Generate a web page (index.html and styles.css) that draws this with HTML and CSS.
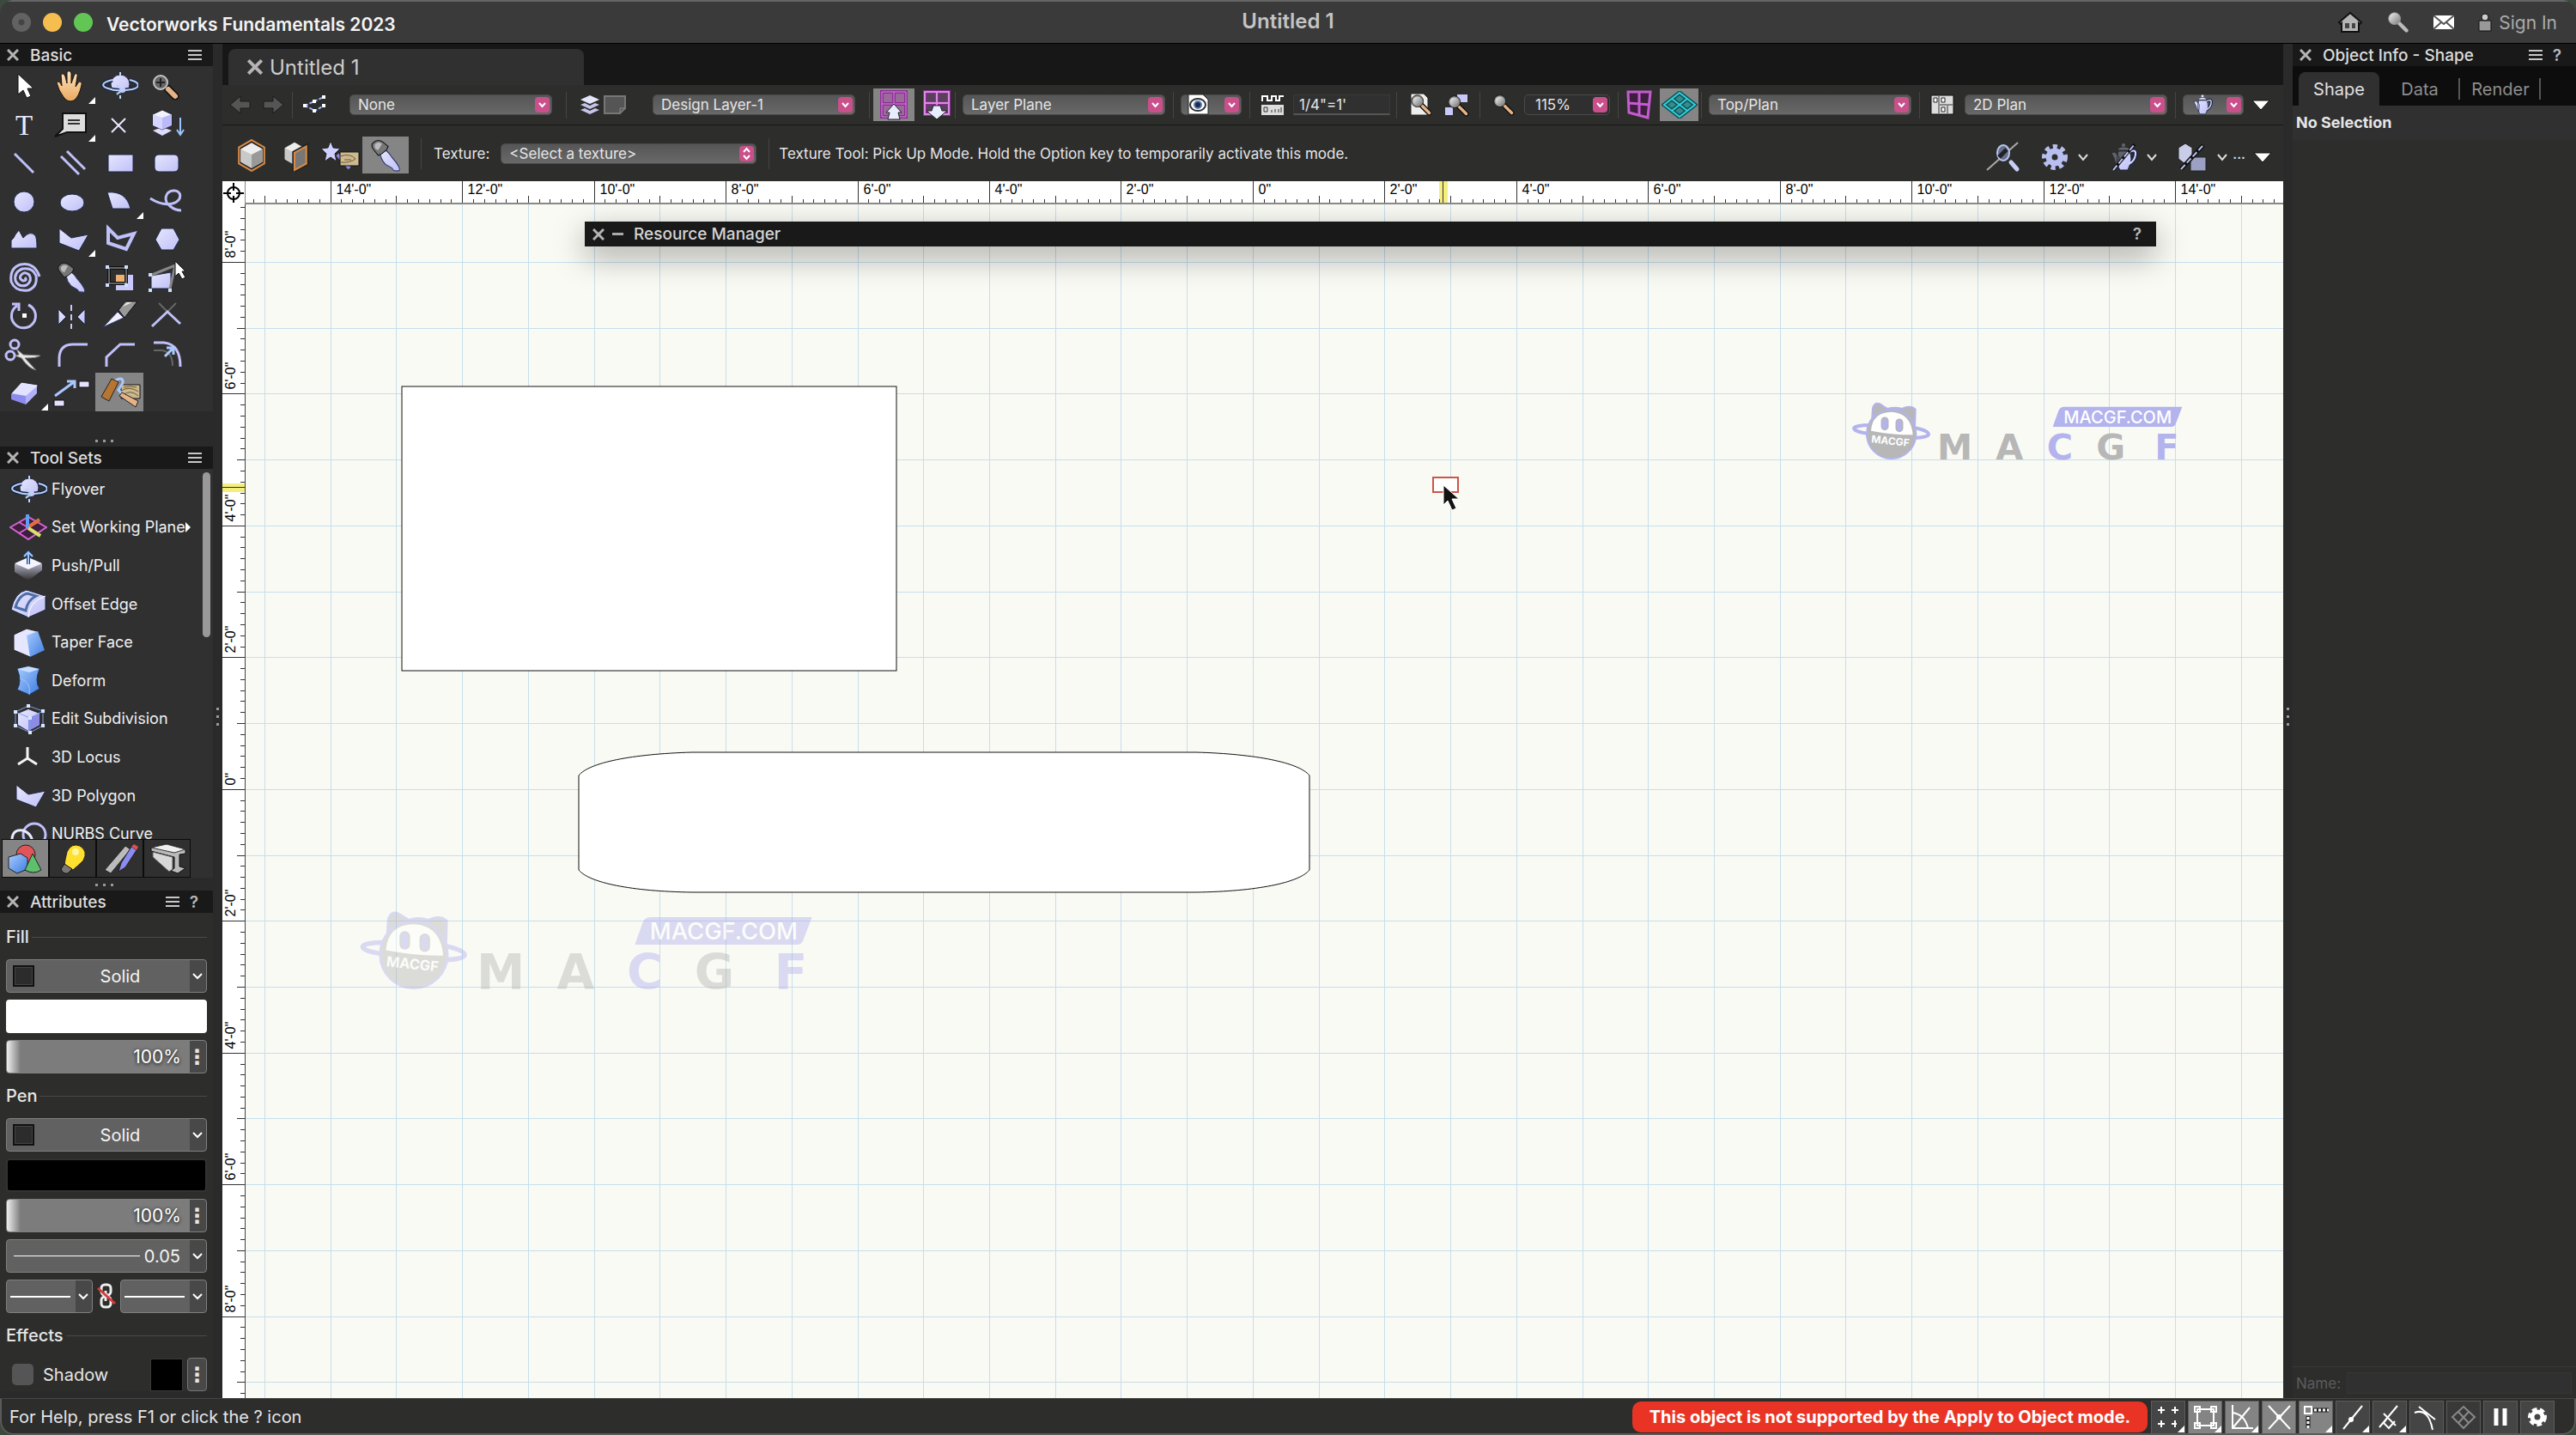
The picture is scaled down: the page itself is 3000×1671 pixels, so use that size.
FILE: index.html
```html
<!DOCTYPE html>
<html lang="en">
<head>
  <meta charset="utf-8">
  <title>Untitled 1</title>
  <link rel="stylesheet" href="styles.css">
</head>
<body>
  <svg class="defs" width="0" height="0" aria-hidden="true">
    <defs>
      <linearGradient id="lav" x1="0" y1="0" x2="1" y2="1"><stop offset="0" stop-color="#e6e6ff"/><stop offset="1" stop-color="#c0c0f8"/></linearGradient>
      <linearGradient id="metal" x1="0" y1="0" x2="1" y2="1"><stop offset="0" stop-color="#f4f4f4"/><stop offset="1" stop-color="#777"/></linearGradient>
      <linearGradient id="blue" x1="0" y1="0" x2="1" y2="1"><stop offset="0" stop-color="#a9ccff"/><stop offset="1" stop-color="#3d7de0"/></linearGradient>
      <linearGradient id="fade" x1="0" y1="0" x2="0" y2="1"><stop offset="0" stop-color="#d8d8f4"/><stop offset="1" stop-color="#d8d8f4" stop-opacity="0"/></linearGradient>
      <linearGradient id="skin" x1="0" y1="0" x2="0" y2="1"><stop offset="0" stop-color="#ffe2bd"/><stop offset="1" stop-color="#e9a85f"/></linearGradient>
    </defs>
    <symbol id="i-close" viewBox="0 0 14 14"><path d="M1 1l12 12M13 1L1 13" stroke="#b4b4b4" stroke-width="3"/></symbol>
    <symbol id="i-menu" viewBox="0 0 16 14"><path d="M0 2h16M0 7h16M0 12h16" stroke="#c8c8c8" stroke-width="2"/></symbol>
    <symbol id="i-chev" viewBox="0 0 14 14"><path d="M2 4l5 6 5-6" fill="none" stroke="#ddd" stroke-width="2"/></symbol>
    <symbol id="i-down" viewBox="0 0 22 14"><path d="M1 2h20L11 13z" fill="#fff" stroke="#111"/></symbol>
    <symbol id="i-flyover" viewBox="0 0 44 40">
      <circle cx="23" cy="19" r="11" fill="url(#lav)" stroke="#1c2742"/>
      <path d="M14 14C0 17 1 22 9 24q8 3 15 2m10-12c13 3 12 9 3 11l-8 1" fill="none" stroke="#1c2742" stroke-width="5"/>
      <path d="M14 14C0 17 1 22 9 24q8 3 15 2m10-12c13 3 12 9 3 11l-8 1M23 5v5M23 32v4M19 20l6 6-6 5" fill="none" stroke="#b9d2fa" stroke-width="2"/>
    </symbol>
    <symbol id="i-dropper" viewBox="0 0 44 40">
      <path d="M16 18l6-4q4 3 7 8l5 6 3 5q2 5-2 4-4 1-6-3l-7-4q-5-5-6-12z" fill="url(#lav)" stroke="#28356b"/>
      <path d="M8 6q5-5 11-1l6 5-2 4-5 4-4 2-5-6q-4-5-1-8z" fill="#777" stroke="#111"/>
      <path d="M10 8q3-4 8-1l-4 7q-5-1-4-6z" fill="#bbb"/>
    </symbol>
    <symbol id="i-poly" viewBox="0 0 44 40"><path d="M8 8l14 11 20-4-11 19-23-9z" fill="url(#lav)" stroke="#1c2742"/></symbol>
    <symbol id="i-glass" viewBox="0 0 30 30"><path d="M15 15l11 11" stroke="#111" stroke-width="7" stroke-linecap="round"/><path d="M16 16l10 10" stroke="#e5b386" stroke-width="4" stroke-linecap="round"/><circle cx="10" cy="10" r="8" fill="#8b8b8b" stroke="#111"/><circle cx="10" cy="10" r="6" fill="url(#metal)"/></symbol>
    <symbol id="i-cube" viewBox="0 0 34 36"><path d="M17 4l12 7v14l-12 7-12-7V11z" fill="#eee"/><path d="M17 17l12-6v14l-12 7z" fill="#999"/><path d="M17 17L5 11v14l12 7z" fill="#c9c9c9"/></symbol>
    <symbol id="i-teapot" viewBox="0 0 30 36">
      <path d="M22 12q8-4 7 3-1 8-8 11" fill="none" stroke="#1c2742" stroke-width="5"/>
      <path d="M9 29q-4-4-5-10l-3-6 4-1 5 6zM9 11h13q4 10 0 17l-2 5h-9q-6-8-2-22z" fill="url(#lav)" stroke="#1c2742"/>
      <path d="M22 12q8-4 7 3-1 8-8 11" fill="none" stroke="#d5d5ff" stroke-width="2"/>
      <path d="M8 10q1-4 7-4t7 4z" fill="#e6e6ff" stroke="#1c2742"/>
      <circle cx="15" cy="4" r="2" fill="#e6e6ff"/>
    </symbol>
  </svg>

  <div class="window">
    <header class="titlebar">
      <div class="lights"><i class="off"></i><i class="yellow"></i><i class="green"></i></div>
      <span class="app-name">Vectorworks Fundamentals 2023</span>
      <span class="doc-name">Untitled 1</span>
      <div class="account">
        <button aria-label="Home"><svg width="30" height="26"><path d="M2 13L15 2l13 11-2 2-1-1v10H5V14l-1 1z" fill="#b5b5b5" stroke="#111" stroke-width="2"/><path d="M9 14h5v6H9zM17 14h4v6h-4z" fill="#444"/></svg></button>
        <button aria-label="Search"><svg width="26" height="26" viewBox="0 0 30 30"><path d="M15 15l11 11" stroke="#bbb" stroke-width="5" stroke-linecap="round"/><circle cx="10" cy="10" r="8" fill="url(#metal)" stroke="#999"/></svg></button>
        <button aria-label="Messages"><svg width="24" height="18"><path d="M0 1h24v16H0z" fill="#fff"/><path d="M0 1l12 10L24 1M0 17l9-8M24 17l-9-8" fill="none" stroke="#555" stroke-width="2"/></svg></button>
        <a href="#" class="signin"><svg width="16" height="22"><path d="M1 9h14v12H1z" fill="#999" stroke="#111"/><circle cx="8" cy="5" r="4" fill="#ccc" stroke="#111"/></svg>Sign In</a>
      </div>
    </header>

    <div class="workspace">
      <aside class="side">
        <section class="palette">
          <h2 class="head"><svg class="x"><use href="#i-close"/></svg>Basic<svg class="menu"><use href="#i-menu"/></svg></h2>
          <div class="tools">
            <button aria-label="Selection"><svg><path d="M15 7v24l6-5 4 9 5-2-4-9h7z" fill="#fff" stroke="#111"/></svg></button>
            <button class="more" aria-label="Pan"><svg><path d="M13 34Q7 26 5 17q3-3 6 4L10 8q3-3 5 2l2 8V5q3-3 5 1v12l4-11q4-1 3 3l-2 12 4-6q4 0 3 4-3 14-9 18-7 3-12-4z" fill="url(#skin)" stroke="#1b1209"/></svg></button>
            <button aria-label="Flyover"><svg><use href="#i-flyover"/></svg></button>
            <button aria-label="Zoom"><svg><path d="M23 24l9 9" stroke="#111" stroke-width="9" stroke-linecap="round"/><path d="M24 25l8 8" stroke="#e5b386" stroke-width="6" stroke-linecap="round"/><circle cx="15" cy="17" r="8" fill="#666" stroke="#c4c4c4" stroke-width="2"/><path d="M10 17h10M15 12v10" stroke="#222" stroke-width="2"/></svg></button>
            <button aria-label="Text"><svg><text x="12" y="33" class="serif-t">T</text></svg></button>
            <button class="more" aria-label="Callout"><svg><path d="M12 8h27v22H17L3 35l9-9z" fill="#ddd" stroke="#111" stroke-width="2"/><path d="M18 16h14M18 20h14" stroke="#333" stroke-width="2"/></svg></button>
            <button aria-label="2D Locus"><svg><path d="M13 14l16 16M29 14L13 30" stroke="#e8e8ff" stroke-width="2"/></svg></button>
            <button aria-label="Extrude"><svg><path d="M6 28l11-4 11 4-11 6z" fill="#dcdcff"/><path d="M17 4l11 5v13l-11 5-11-5V9z" fill="#f2f2ff" stroke="#222"/><path d="M17 13l11-4v13l-11 5z" fill="#babafa"/><path d="M6 9l11 4v14L6 22z" fill="#d5d5ff"/><path d="M38 13v18M34 27l4 6 4-6" stroke="#9cc4ff" stroke-width="2" fill="none"/></svg></button>
            <button aria-label="Line"><svg><path d="M11 10l22 22" class="ln"/></svg></button>
            <button aria-label="Double Line"><svg><path d="M10 13l21 21M17 7l21 21" class="ln"/></svg></button>
            <button aria-label="Rectangle"><svg><path d="M9 11h29v20H9z" class="sh"/></svg></button>
            <button aria-label="Rounded Rectangle"><svg><rect x="8" y="11" width="28" height="20" rx="5" class="sh"/></svg></button>
            <button aria-label="Circle"><svg><circle cx="22" cy="22" r="12" class="sh"/></svg></button>
            <button aria-label="Oval"><svg><ellipse cx="23" cy="23" rx="14" ry="10" class="sh"/></svg></button>
            <button class="more" aria-label="Arc"><svg><path d="M8 11q22-2 27 19H14z" class="sh"/></svg></button>
            <button aria-label="Freehand"><svg><path d="M3 18q14 9 26 6c13-4 10-16 1-15-10 1-12 12-4 18q6 5 13 5" class="ln"/></svg></button>
            <button aria-label="Freeform"><svg><path d="M7 31v-9q3-2 5-7l4-5 5 9q8-9 14-3 2 3 2 15z" class="sh"/></svg></button>
            <button class="more" aria-label="Polygon"><svg><use href="#i-poly"/></svg></button>
            <button aria-label="Polyline"><svg><path d="M9 8l11 11 19-5-9 18-21-7z" class="ln thick"/></svg></button>
            <button aria-label="Regular Polygon"><svg><path d="M16 8h14l7 13-7 12H16L9 21z" class="sh"/></svg></button>
            <button aria-label="Spiral"><svg><path d="M23 20q3 4-2 4-5-2-3-6 4-6 10-1 4 7-3 12-9 3-13-5-2-10 8-14 12-2 16 8 2 13-9 17-15 2-20-10Q5 9 18 5q16-3 22 14" class="ln spiral"/></svg></button>
            <button aria-label="Eyedropper"><svg><use href="#i-dropper"/></svg></button>
            <button aria-label="Clip"><svg><path d="M18 17h20v18H18z" fill="#c8c8fb"/><path d="M18 17h11v10H18z" fill="#eeb070"/><path d="M10 9h20v18H10z" fill="none" stroke="#111" stroke-width="4"/><path d="M10 9h20v18H10z" fill="none" stroke="#bbb"/><path d="M6 6h4v4H6zM28 6h4v4h-4zM6 27h4v4H6zM28 27h4v4h-4z" fill="#cfe0ff"/></svg></button>
            <button aria-label="Reshape"><svg><path d="M4 18l23-4v19H4z" class="sh"/><path d="M5 17L32 6l-6 27" fill="none" stroke="#888" stroke-width="3"/><path d="M1 15h4v4H1zM1 33h4v4H1zM24 33h4v4h-4z" fill="#cfe0ff"/><path d="M32 1v18l4-4 4 7 4-2-4-7h4z" fill="#fff" stroke="#111"/></svg></button>
            <button aria-label="Rotate"><svg><path d="M27 8A14 14 0 1 1 14 9M8 7h8v8" class="ln"/><path d="M20 18h5v5h-5z" fill="#fff"/></svg></button>
            <button aria-label="Mirror"><svg><path d="M7 13v18l9-9zM38 13v18l-9-9z" class="sh"/><path d="M22 8v28" stroke="#c8c8fa" stroke-width="2" stroke-dasharray="7 4"/></svg></button>
            <button aria-label="Split"><svg><path d="M3 34l17-18 7 7z" fill="#f0f0ff" stroke="#28356b"/><path d="M21 14L29 4h14L28 23z" fill="#999" stroke="#111"/><path d="M26 10L31 5h6z" fill="#eee"/></svg></button>
            <button aria-label="Trim"><svg><path d="M13 6l10 10L33 6" fill="none" stroke="#666" stroke-width="2"/><path d="M5 33l18-17 15 14" class="ln"/></svg></button>
            <button aria-label="Scissors"><svg><path d="M13 14l8 7 20 1q-3 3-18 3l13 14q-9-2-17-14l-8-3 5-1z" fill="#e6e6e6" stroke="#777"/><circle cx="11" cy="9" r="5" class="ln"/><circle cx="6" cy="22" r="5" class="ln"/></svg></button>
            <button aria-label="Fillet"><svg><path d="M8 35V24Q9 9 24 9h17" class="ln"/></svg></button>
            <button aria-label="Chamfer"><svg><path d="M7 35V24L23 9h17" class="ln"/></svg></button>
            <button aria-label="Offset"><svg><path d="M7 7h12q19 2 19 28" class="ln"/><path d="M7 16h10q12 2 12 18" fill="none" stroke="#666" stroke-width="2"/><path d="M20 23l10-10M22 13h8v8" fill="none" stroke="#a9ccff" stroke-width="3"/></svg></button>
            <button class="more" aria-label="Eraser"><svg><path d="M7 21L19 8l19 3-1 10-13 12-17-6z" fill="#e3e3ff" stroke="#222"/><path d="M7 21l17 3v10L7 28z" fill="#8c8cf0"/><path d="M24 24l13-11v8L24 34z" fill="#b1b1fa"/></svg></button>
            <button aria-label="Attribute Mapping"><svg><path d="M3 24L25 8M17 7h9v8" fill="none" stroke="#a9c8ff" stroke-width="3"/><path d="M31 7h12v7H31zM2 29h12v7H2z" fill="#e8e0ff" stroke="#111"/></svg></button>
            <button class="active" aria-label="Texture"><svg><path d="M24 11h22v16H24z" fill="#cdb98f" stroke="#111"/><path d="M24 18q10-6 20 1M26 23q9-7 18 1M27 14q8-2 15 0" fill="none" stroke="#6d5a38"/><path d="M17 6q10-5 9 3l-5 8 5 6" fill="none" stroke="#a9c8ff" stroke-width="3"/><path d="M13 4l8 4-11 22-9-5z" fill="#b67632" stroke="#222"/><path d="M22 24l3-4 19 10-3 7z" fill="#e5b386" stroke="#222"/></svg></button>
          </div>
          <div class="grip"><i></i><i></i><i></i></div>
        </section>

        <section class="palette">
          <h2 class="head"><svg class="x"><use href="#i-close"/></svg>Tool Sets<svg class="menu"><use href="#i-menu"/></svg></h2>
          <div class="list-wrap">
            <ul class="list">
              <li><svg><use href="#i-flyover"/></svg>Flyover</li>
              <li class="sub"><svg><path d="M1 20L22 8l21 12-21 14z" fill="#3d1e3d" stroke="#d763d7" stroke-width="2"/><path d="M11 14l22 13M33 14L11 27" stroke="#d763d7" stroke-width="2"/><path d="M21 5v16" stroke="#5ea0f4" stroke-width="4"/><path d="M23 19l12-8" stroke="#e0703b" stroke-width="4"/><path d="M22 21l14 9" stroke="#dbe26a" stroke-width="4"/></svg>Set Working Plane</li>
              <li><svg><path d="M6 19l16-7 16 7v7l-16 12L6 28z" fill="url(#fade)"/><path d="M6 18l16-7 16 7-16 7z" fill="#f4f4ff"/><path d="M22 19V5M17 10l5-5 5 5" fill="none" stroke="#223f66" stroke-width="4"/><path d="M22 19V5M17 10l5-5 5 5" fill="none" stroke="#9cc4ff" stroke-width="2"/></svg>Push/Pull</li>
              <li><svg><path d="M2 27Q6 7 20 4l22 7v16L22 36z" fill="url(#lav)" stroke="#1c2742"/><path d="M22 36q0-18 20-25" fill="none" stroke="#fff"/><path d="M7 24Q11 10 21 8l10 3Q21 16 19 28z" fill="none" stroke="#4d6fa8" stroke-width="3"/></svg>Offset Edge</li>
              <li><svg><path d="M5 11l15-7 12 3 9 22-17 8L5 29z" fill="#e6e6ff" stroke="#222"/><path d="M20 12l13-5 8 22-17 8z" fill="url(#blue)"/></svg>Taper Face</li>
              <li><svg><path d="M9 7l13-3 13 3q-6 14 0 23l-12 7-14-6q6-10 0-24z" fill="url(#blue)" stroke="#1c3562"/><path d="M9 7l14 4 12-4-13-3z" fill="#c8deff"/><path d="M12 18q14 4 11 19" fill="none" stroke="#9cc4ff"/></svg>Deform</li>
              <li><svg><path d="M22 9l13 5v13l-13 7-12-7V14z" fill="url(#lav)"/><path d="M22 19l13-5v13l-13 7z" fill="#8c8ce8"/><path d="M22 5l17 6v17l-15 8-17-8V12zM7 12l17 7 15-8M24 19v17" fill="none" stroke="#7da0e4"/><path d="M20 3h4v4h-4zM5 10h4v4H5zM37 9h4v4h-4zM22 17h4v4h-4zM5 26h4v4H5zM37 26h4v4h-4zM22 34h4v4h-4z" fill="#dce6ff"/></svg>Edit Subdivision</li>
              <li><svg><path d="M21 9v15M21 22L10 29M21 22l11 7" stroke="#f4f4f4" stroke-width="3" fill="none"/></svg>3D Locus</li>
              <li><svg><use href="#i-poly"/></svg>3D Polygon</li>
              <li><svg><circle cx="29" cy="21" r="13" class="ln"/><path d="M3 26q1-12 13-10 11 4 11 16" fill="none" stroke="#e8e8ff" stroke-width="3"/></svg>NURBS Curve</li>
            </ul>
            <div class="thumb"></div>
          </div>
          <div class="sets">
            <button class="active" aria-label="3D Modeling"><svg><circle cx="22" cy="15" r="11" fill="#e0555a" stroke="#222"/><path d="M2 18l14-4 8 5v13l-12 5L2 31z" fill="url(#blue)" stroke="#222"/><path d="M30 14l10 19q-9 6-19 0z" fill="#5cc06c" stroke="#222"/></svg></button>
            <button aria-label="Visualization"><svg><path d="M12 27Q13 20 15 12 20 1 30 5q10 6 4 17-6 6-12 11z" fill="#ffe02e" stroke="#222"/><path d="M12 26l9 6-5 5q-6 1-8-5z" fill="#777" stroke="#111"/><circle cx="25" cy="12" r="4" fill="#fff6a0"/></svg></button>
            <button aria-label="Dims/Notes"><svg><path d="M4 33L28 5l6 4L11 37z" fill="#bbb" stroke="#222"/><path d="M20 35l3-10L35 6l6 4-13 20z" fill="#8c8cf0" stroke="#222"/><path d="M35 6l6 4 2-4-5-3z" fill="#d8505a"/></svg></button>
            <button aria-label="Detailing"><svg><path d="M3 7l18-4 22 6v5l-7 1v14l7 2-9 6-8-3 4-3V18L3 11z" fill="#bbb" stroke="#111"/><path d="M3 7l18-4 22 6-13 4z" fill="#eee" stroke="#333"/><path d="M5 12l23 6v14l-4 3L5 18z" fill="#d8d8d8" stroke="#555"/></svg></button>
          </div>
          <div class="grip low"><i></i><i></i><i></i></div>
        </section>

        <section class="palette attributes">
          <h2 class="head"><svg class="x"><use href="#i-close"/></svg>Attributes<svg class="menu"><use href="#i-menu"/></svg><b class="help">?</b></h2>
          <h3>Fill</h3>
          <div class="field"><i class="swatch"></i><select aria-label="Fill style"><option>Solid</option></select></div>
          <button class="color white" aria-label="Fill color"></button>
          <div class="field opacity"><output>100%</output><button class="dots" aria-label="Fill opacity options">⋮</button></div>
          <h3>Pen</h3>
          <div class="field"><i class="swatch"></i><select aria-label="Pen style"><option>Solid</option></select></div>
          <button class="color black" aria-label="Pen color"></button>
          <div class="field opacity"><output>100%</output><button class="dots" aria-label="Pen opacity options">⋮</button></div>
          <div class="field"><i class="rule"></i><select class="weight" aria-label="Line thickness"><option>0.05</option></select></div>
          <div class="ends">
            <div class="field"><i class="rule full"></i><select aria-label="Start marker"><option></option></select></div>
            <svg width="24" height="30"><rect x="6" y="2" width="11" height="12" rx="4" fill="none" stroke="#eee" stroke-width="3"/><rect x="6" y="16" width="11" height="12" rx="4" fill="none" stroke="#eee" stroke-width="3"/><path d="M11 9v12" stroke="#eee" stroke-width="3"/><path d="M2 6l20 18" stroke="#d83a3a" stroke-width="3"/></svg>
            <div class="field"><i class="rule full"></i><select aria-label="End marker"><option></option></select></div>
          </div>
          <h3>Effects</h3>
          <div class="shadow-row">
            <input type="checkbox" id="shadow"><label for="shadow">Shadow</label>
            <button class="chip" aria-label="Shadow color"></button>
            <button class="dots boxed" aria-label="Shadow options">⋮</button>
          </div>
        </section>
        <div class="gutter-dots"><i></i><i></i><i></i></div>
      </aside>

      <main class="doc">
        <nav class="tabs"><button class="tab"><svg class="x"><use href="#i-close"/></svg>Untitled 1</button></nav>

        <div class="viewbar">
          <div class="group nav">
            <button aria-label="Previous View"><svg width="26" height="24"><path d="M1 12L13 2v6h11v8H13v6z" fill="#555" stroke="#1a1a1a"/></svg></button>
            <button aria-label="Next View"><svg width="26" height="24"><path d="M25 12L13 2v6H2v8h11v6z" fill="#555" stroke="#1a1a1a"/></svg></button>
          </div>
          <div class="group wide">
            <svg width="30" height="24"><path d="M3 13l11-5 11-5M3 13l12 6 10-6" fill="none" stroke="#9db4f5" stroke-width="2" stroke-dasharray="4 2"/><path d="M1 11h4v4H1zM12 6h4v4h-4zM23 1h4v4h-4zM23 11h4v4h-4zM12 17h4v4h-4z" fill="#fff"/></svg>
            <select class="w236" aria-label="Class"><option>None</option></select>
          </div>
          <div class="group wide">
            <div class="icons"><svg width="24" height="24"><path d="M1 6l11-5 11 5-11 5z" fill="#e5e5fa"/><path d="M1 12l5-2 6 3 6-3 5 2-11 5zM1 18l5-2 6 3 6-3 5 2-11 5z" fill="#c5c5ea"/></svg><svg width="26" height="24"><path d="M1 2h24v14l-6 6H1z" fill="#555" stroke="#777" stroke-width="2"/><path d="M19 22v-6h6" fill="none" stroke="#888"/></svg></div>
            <select class="w236" aria-label="Layer"><option>Design Layer-1</option></select>
          </div>
          <div class="group plane">
            <button class="active" aria-label="Automatic Plane"><svg width="34" height="36"><path d="M3 3h28v29H3z" fill="#9a6a9a"/><path d="M3 3h28v29H3zM17 3v29M3 17h28" fill="none" stroke="#8e2c96" stroke-width="4"/><path d="M3 3h28v29H3zM17 3v29M3 17h28" fill="none" stroke="#d88be0"/><path d="M17 17l9 10h-4l2 8H10l2-8H8z" fill="#e8ecff" stroke="#222"/></svg></button>
            <button aria-label="Layer Plane"><svg width="34" height="36"><path d="M3 3h28v26H3z" fill="#5a405a"/><path d="M3 3h28v26H3zM17 3v26M3 16h28" fill="none" stroke="#8e2c96" stroke-width="4"/><path d="M3 3h28v26H3zM17 3v26M3 16h28" fill="none" stroke="#d88be0" stroke-width="2"/><path d="M17 35L5 25h6l2-6h8l2 6h6z" fill="#e8ecff" stroke="#222"/></svg></button>
          </div>
          <div class="group"><select class="w236" aria-label="Active plane"><option>Layer Plane</option></select></div>
          <div class="group">
            <div class="pick"><svg width="26" height="26"><path d="M1 1h17l6 6v17H1z" fill="#fff" stroke="#222"/><ellipse cx="12" cy="13" rx="9" ry="7" fill="#fff" stroke="#333" stroke-width="2"/><circle cx="12" cy="13" r="4" fill="#1b2c4c" stroke="#5a7bb0" stroke-width="2"/></svg><select aria-label="Saved views"><option></option></select></div>
          </div>
          <div class="group scale">
            <svg width="28" height="26"><path d="M2 9V3h6v5h5V3h5v5h4V3h5" fill="none" stroke="#fff" stroke-width="2"/><path d="M1 13h26v12H1z" fill="#ddd"/><path d="M4 16h4v5H4zM13 22v-3M17 22v-4M21 22v-4M24 22v-6" fill="none" stroke="#333"/></svg>
            <input type="text" value="1/4&quot;=1'" aria-label="Layer scale">
          </div>
          <div class="group fit">
            <button aria-label="Fit to Page"><svg width="26" height="28"><path d="M2 1h15l5 5v20H2z" fill="#eee" stroke="#222"/><g transform="translate(1 1)"><use href="#i-glass" width="26" height="26"/></g></svg></button>
            <button aria-label="Fit to Objects"><svg width="30" height="28"><path d="M2 17h9v9H2zM16 2h12v9H16z" fill="#c8c8fb"/><g transform="translate(4 2)"><use href="#i-glass" width="26" height="26"/></g></svg></button>
          </div>
          <div class="group zoom">
            <svg width="26" height="28"><use href="#i-glass" width="26" height="28"/></svg>
            <select class="w100" aria-label="Zoom"><option>115%</option></select>
          </div>
          <div class="group persp">
            <button aria-label="Perspective"><svg width="30" height="34"><path d="M2 2h26l-3 30L3 26zM15 2v27M3 15l24 2" fill="#3d1e3d" stroke="#c45cd0" stroke-width="3"/></svg></button>
            <button class="active" aria-label="Top Plan"><svg width="42" height="32"><path d="M21 2l18 14-18 14L3 16zM12 9l18 14M30 9L12 23" fill="#3a8a8c" stroke="#0e5258" stroke-width="5"/><path d="M21 2l18 14-18 14L3 16zM12 9l18 14M30 9L12 23" fill="none" stroke="#2fd0d8" stroke-width="2"/></svg></button>
          </div>
          <div class="group"><select class="w236" aria-label="View"><option>Top/Plan</option></select></div>
          <div class="group render">
            <svg width="28" height="24"><path d="M1 1h26v22H1z" fill="#ddd" stroke="#111"/><path d="M10 2v20M11 12h15M20 12v10" fill="none" stroke="#888" stroke-width="2"/><path d="M4 4h4v5H4zM13 4h4v5h-4zM13 15h4v5h-4z" fill="#fff" stroke="#222"/></svg>
            <select class="w236" aria-label="Render mode"><option>2D Plan</option></select>
          </div>
          <div class="group last">
            <div class="pick"><svg width="30" height="26"><use href="#i-teapot"/></svg><select aria-label="Render options"><option></option></select></div>
            <svg width="22" height="14"><use href="#i-down"/></svg>
          </div>
        </div>

        <div class="modebar">
          <div class="modes">
            <button aria-label="Object Mode"><svg width="40" height="38" viewBox="0 0 34 36"><path d="M17 1l14 8v18l-14 8-14-8V9z" fill="#222" stroke="#d68a45" stroke-width="2"/><use href="#i-cube" width="34" height="36"/></svg></button>
            <button aria-label="Face Mode"><svg width="40" height="38" viewBox="0 0 34 36"><use href="#i-cube" width="34" height="32"/><path d="M17 15l13-7v19l-13 7z" fill="#777" stroke="#222" stroke-width="5"/><path d="M17 15l13-7v19l-13 7z" fill="#777" stroke="#d68a45" stroke-width="2"/></svg></button>
            <button aria-label="Resource Mode"><svg width="48" height="38"><path d="M20 18l14 16" stroke="#8c8ce8" stroke-width="4"/><path d="M12 2l3 8 8 1-6 6 2 9-7-5-7 5 2-9-6-6 8-1z" fill="#d0d0ff" stroke="#222"/><path d="M23 15h22v16H23z" fill="#cdb98f" stroke="#111"/><path d="M23 20q12-4 18 3-6 5-18 4M28 24h8" fill="none" stroke="#6d5a38"/></svg></button>
            <button class="active" aria-label="Pick Up Mode"><svg width="46" height="42"><use href="#i-dropper"/></svg></button>
          </div>
          <div class="texture">
            <label for="tex">Texture:</label>
            <select id="tex" class="both"><option>&lt;Select a texture&gt;</option></select>
          </div>
          <p class="hint">Texture Tool: Pick Up Mode. Hold the Option key to temporarily activate this mode.</p>
          <div class="opts">
            <button aria-label="Smart Cursor"><svg width="40" height="38"><path d="M1 34L37 2" stroke="#aaa" stroke-width="2"/><ellipse cx="20" cy="14" rx="7" ry="9" fill="#66708f" stroke="#bcc6ee" stroke-width="2"/><path d="M15 19l9-9" stroke="#222" stroke-width="5"/><path d="M29 25l7 8" stroke="#c9cdf6" stroke-width="5" stroke-linecap="round"/></svg></button>
            <button aria-label="Settings"><svg width="34" height="36"><circle cx="17" cy="18" r="12" fill="none" stroke="#b8bff0" stroke-width="6" stroke-dasharray="5 4"/><circle cx="17" cy="18" r="7" fill="none" stroke="#b8bff0" stroke-width="7"/></svg><svg width="14" height="14"><use href="#i-chev"/></svg></button>
            <button aria-label="Rendering"><svg width="34" height="36"><use href="#i-teapot"/><path d="M2 2h24L6 34z" fill="#2d2d2c" opacity="0.7"/><path d="M5 33L30 3" stroke="#111" stroke-width="4"/><path d="M5 33L30 3" stroke="#b8bff0" stroke-width="2" stroke-dasharray="7 3"/></svg><svg width="14" height="14"><use href="#i-chev"/></svg></button>
            <button aria-label="Display"><svg width="36" height="36"><path d="M9 2l8 5v12l-8 7-8-6V7z" fill="#c9cde8" stroke="#222"/><path d="M15 18h18v16H15z" fill="#9ca1c4" stroke="#222"/><path d="M4 32L30 4" stroke="#111" stroke-width="5"/><path d="M4 32L30 4" stroke="#b8bff0" stroke-width="2" stroke-dasharray="7 3"/></svg><svg width="14" height="14"><use href="#i-chev"/></svg></button>
            <span class="etc">...</span>
            <svg width="22" height="14"><use href="#i-down"/></svg>
          </div>
        </div>

        <div class="sheet">
          <div class="corner"><svg width="26" height="26"><circle cx="13" cy="14" r="7" fill="none" stroke="#000" stroke-width="2"/><path d="M13 2v9M13 17v8M1 14h9M16 14h9" stroke="#000" stroke-width="2"/></svg></div>
          <svg class="ruler-h" id="rulerH"></svg>
          <svg class="ruler-v" id="rulerV"></svg>
          <div class="canvas">
            <svg class="drawing">
              <g id="grid"></g>
              <rect x="182" y="212" width="576" height="331" class="obj"/>
              <path d="M388 665C400 650 450 640 520 638H1107C1177 640 1227 650 1239 665V775C1227 790 1177 800 1107 801H520C450 800 400 790 388 775Z" class="obj"/>
              <svg x="1844" y="202" width="450" height="130" viewBox="0 0 1350 390">
                <path d="M150 150l3-45q10-28 37-6l15 9q25-8 50 0 30-14 47 2l-2 70z" fill="#b6b7b6" stroke="#b3b3ee" stroke-width="6"/>
                <path d="M148 165c-85 0-75 22-5 30 80 20 205 20 205 2 0-14-55-24-55-24" fill="none" stroke="#b3b3ee" stroke-width="12"/>
                <circle cx="218" cy="196" r="86" fill="#b6b7b6" stroke="#b3b3ee" stroke-width="6"/>
                <path d="M147 185q4-65 72-66 68 4 74 80-75 0-146-14z" fill="#fff"/>
                <rect x="184" y="139" width="22" height="42" rx="11" fill="#b3b3ee" stroke="#b6b7b6" stroke-width="5"/>
                <rect x="235" y="145" width="22" height="42" rx="11" fill="#b3b3ee" stroke="#b6b7b6" stroke-width="5"/>
                <text x="147" y="226" transform="rotate(6 147 226)" class="logo-face">MACGF</text>
                <text y="284" class="logo-word"><tspan x="440">M</tspan><tspan x="631">A</tspan><tspan x="807" class="tint">C</tspan><tspan x="985">G</tspan><tspan x="1180" class="tint">F</tspan></text>
                <path d="M822 101h412l-22 58q-4 12-16 12H782l20-56q5-14 20-14z" fill="#b3b3ee"/>
                <text x="820" y="158" class="logo-site">MACGF.COM</text>
              </svg>
              <svg x="96" y="784" width="617" height="178" viewBox="0 0 1350 390" opacity="0.45">
                <path d="M150 150l3-45q10-28 37-6l15 9q25-8 50 0 30-14 47 2l-2 70z" fill="#b6b7b6" stroke="#b3b3ee" stroke-width="6"/>
                <path d="M148 165c-85 0-75 22-5 30 80 20 205 20 205 2 0-14-55-24-55-24" fill="none" stroke="#b3b3ee" stroke-width="12"/>
                <circle cx="218" cy="196" r="86" fill="#b6b7b6" stroke="#b3b3ee" stroke-width="6"/>
                <path d="M147 185q4-65 72-66 68 4 74 80-75 0-146-14z" fill="#fff"/>
                <rect x="184" y="139" width="22" height="42" rx="11" fill="#b3b3ee" stroke="#b6b7b6" stroke-width="5"/>
                <rect x="235" y="145" width="22" height="42" rx="11" fill="#b3b3ee" stroke="#b6b7b6" stroke-width="5"/>
                <text x="147" y="226" transform="rotate(6 147 226)" class="logo-face">MACGF</text>
                <text y="284" class="logo-word"><tspan x="440">M</tspan><tspan x="631">A</tspan><tspan x="807" class="tint">C</tspan><tspan x="985">G</tspan><tspan x="1180" class="tint">F</tspan></text>
                <path d="M822 101h412l-22 58q-4 12-16 12H782l20-56q5-14 20-14z" fill="#b3b3ee"/>
                <text x="820" y="158" class="logo-site">MACGF.COM</text>
              </svg>
              <rect x="1383" y="318" width="29" height="17" fill="#fff" stroke="#cb5547" stroke-width="2"/>
              <path d="M1395 327v23l5-5 5 11 5-2-5-11h8z" fill="#111" stroke="#fff"/>
            </svg>
            <div class="resource"><svg class="x"><use href="#i-close"/></svg><i class="min"></i>Resource Manager<b class="help">?</b></div>
          </div>
        </div>
      </main>

      <aside class="info">
        <div class="gutter-dots"><i></i><i></i><i></i></div>
        <div class="info-body">
          <h2 class="head"><svg class="x"><use href="#i-close"/></svg>Object Info - Shape<svg class="menu"><use href="#i-menu"/></svg><b class="help">?</b></h2>
          <div class="info-tabs"><button class="on">Shape</button><button>Data</button><button>Render</button></div>
          <div class="selection">No Selection</div>
          <div class="name-row"><label for="objname">Name:</label><input type="text" id="objname"></div>
        </div>
      </aside>
    </div>

    <footer class="statusbar">
      <span class="status">For Help, press F1 or click the ? icon</span>
      <span class="alert">This object is not supported by the Apply to Object mode.</span>
      <div class="snaps">
        <button class="more" aria-label="Snap to Grid"><svg><path d="M5 9h8M9 5v8M21 9h8M25 5v8M5 25h8M9 21v8M21 25h6M25 21v8" class="w"/></svg></button>
        <button class="on more" aria-label="Snap to Object"><svg><path d="M8 8h19v19H8z" class="w"/><path d="M5 5h6v6H5zM24 5h6v6h-6zM5 24h6v6H5zM24 24h6v6h-6z" class="w"/></svg></button>
        <button class="on more" aria-label="Snap to Angle"><svg><path d="M6 3v27h24M6 30L26 6M6 12q14 2 18 18" class="w"/></svg></button>
        <button class="on" aria-label="Snap to Intersection"><svg><path d="M5 4l25 27M30 4L5 31" class="w"/><circle cx="17" cy="17" r="3" fill="#fff"/></svg></button>
        <button class="on more" aria-label="Smart Points"><svg><path d="M4 5h8v8H4z" class="w"/><path d="M14 9h18M8 16v14" stroke="#222" stroke-width="5"/><path d="M15 9h17M8 17v13" stroke="#fff" stroke-width="3" stroke-dasharray="3 2"/></svg></button>
        <button class="more" aria-label="Snap to Distance"><svg><path d="M6 31L28 4" class="w"/><circle cx="15" cy="20" r="3" fill="#fff"/></svg></button>
        <button class="more" aria-label="Smart Edge"><svg><path d="M5 29L26 4M10 13l14 14M16 16l-6 8 6 6 7-8" class="w"/></svg></button>
        <button aria-label="Snap to Tangent"><svg><path d="M3 12q16-6 21 20M8 5l19 15" class="w"/></svg></button>
        <button class="dim" aria-label="Snap to Working Plane"><svg><path d="M17 5l13 12-13 13L4 17zM11 11l12 13M23 11L11 24" fill="none" stroke="#888" stroke-width="2"/></svg></button>
        <button aria-label="Suspend Snapping"><svg><path d="M12 7v20M22 7v20" stroke="#fff" stroke-width="5"/></svg></button>
        <button aria-label="Snapping Settings"><svg><circle cx="17" cy="17" r="8" fill="none" stroke="#fff" stroke-width="6" stroke-dasharray="5 3"/><circle cx="17" cy="17" r="6" fill="none" stroke="#fff" stroke-width="5"/></svg></button>
      </div>
    </footer>
  </div>

  <script>
    const NS = 'http://www.w3.org/2000/svg';
    const foot = 76.73;
    const originX = 1173.4;
    const originY = 681.3;
    const rulerH = document.getElementById('rulerH');
    const rulerV = document.getElementById('rulerV');
    const grid = document.getElementById('grid');

    function add(parent, tag, attrs, text) {
      const el = document.createElementNS(NS, tag);
      for (const key in attrs) el.setAttribute(key, attrs[key]);
      if (text) el.textContent = text;
      parent.appendChild(el);
    }

    function label(n) {
      return n === 0 ? '0"' : Math.abs(n) + "'-0\"";
    }

    function drawRuler(svg, origin, length, vertical) {
      const first = Math.ceil(-origin / foot * 6);
      const last = Math.floor((length - origin) / foot * 6);
      for (let i = first; i <= last; i++) {
        const p = Math.floor(origin + i * foot / 6) + 0.5;
        const size = i % 12 === 0 ? 26 : i % 6 === 0 ? 9 : 5;
        const d = vertical ? `M${26 - size} ${p}H26` : `M${p} ${26 - size}V26`;
        add(svg, 'path', { d: d, class: 'tick' });
        if (i % 12 === 0) {
          const at = vertical
            ? { transform: `translate(15 ${p - 5}) rotate(-90)` }
            : { x: p + 6, y: 15 };
          add(svg, 'text', at, label(i / 6));
        }
        if (i % 6 === 0) {
          add(grid, 'path', { d: vertical ? `M0 ${p}H4000` : `M${p} 0V4000` });
        }
      }
    }

    // pointer position marks
    add(rulerH, 'rect', { x: 1390, y: 0, width: 10, height: 26, class: 'mark' });
    add(rulerH, 'path', { d: 'M1394.5 0V26', class: 'tick' });
    add(rulerV, 'rect', { x: 0, y: 325, width: 26, height: 10, class: 'mark' });
    add(rulerV, 'path', { d: 'M0 329.5H26', class: 'tick' });

    drawRuler(rulerH, originX, rulerH.clientWidth, false);
    drawRuler(rulerV, originY, rulerV.clientHeight, true);
  </script>
</body>
</html>
```
FILE: styles.css
```css
* {
  margin: 0;
  padding: 0;
  box-sizing: border-box;
}
body {
  background: #3c4a3e;
  font-family: Inter, "Liberation Sans", sans-serif;
  font-size: 18px;
  color: #e6e6e6;
}
button {
  border: none;
  background: none;
  font: inherit;
  color: inherit;
  display: flex;
  align-items: center;
  justify-content: center;
}
select, input {
  font: inherit;
  color: inherit;
}
svg {
  display: block;
  flex: none;
}
.defs {
  position: absolute;
}
.window {
  height: 100vh;
  display: flex;
  flex-direction: column;
  background: #2d2d2c;
  border-radius: 16px;
  overflow: hidden;
  box-shadow: inset 0 0 0 2px #5a5a5a;
}

/* title bar */
.titlebar {
  height: 51px;
  flex: none;
  display: flex;
  align-items: center;
  position: relative;
  padding: 0 22px 0 14px;
  background: #3a3a3a;
  border-top: 2px solid #666;
  border-bottom: 1px solid #000;
  font-size: 21px;
}
.lights {
  display: flex;
  gap: 14px;
}
.lights i {
  width: 22px;
  height: 22px;
  border-radius: 50%;
}
.off { background: radial-gradient(#444 3px, #626262 4px); }
.yellow { background: #f6be4f; }
.green { background: #62c655; }
.app-name {
  margin: 4px 0 0 16px;
  font-weight: 600;
  color: #f4f4f4;
}
.doc-name {
  position: absolute;
  left: 0;
  right: 0;
  top: 8px;
  text-align: center;
  font-size: 24px;
  font-weight: 600;
  color: #c4c4c4;
}
.account {
  margin-left: auto;
  display: flex;
  align-items: center;
  gap: 28px;
  position: relative;
}
.signin {
  display: flex;
  align-items: center;
  gap: 8px;
  color: #aaa;
  text-decoration: none;
}

/* side palettes */
.workspace {
  flex: 1;
  min-height: 0;
  display: flex;
}
.side {
  width: 259px;
  flex: none;
  padding-right: 11px;
  position: relative;
  background: #2a2a2a;
}
.palette {
  background: #303030;
}
.head {
  height: 26px;
  display: flex;
  align-items: center;
  padding: 0 13px 0 8px;
  background: #191919;
  font-size: 19px;
  font-weight: 500;
  color: #dcdcdc;
}
.x {
  width: 14px;
  height: 14px;
  margin-right: 13px;
}
.menu {
  width: 16px;
  height: 14px;
  margin-left: auto;
}
.help {
  margin: 0 4px 0 12px;
  font-weight: 600;
  color: #b8b8b8;
}
.tools {
  width: 222px;
  height: 402px;
  display: grid;
  grid-template-columns: repeat(4, 1fr);
  grid-template-rows: repeat(9, 1fr);
}
.tools svg, .list svg, .sets svg {
  width: 44px;
  height: 40px;
}
.tools svg {
  overflow: visible;
}
.more {
  position: relative;
}
.more::after {
  content: "";
  position: absolute;
  right: 0;
  bottom: 1px;
  border: 4px solid transparent;
  border-right-color: #fff;
  border-bottom-color: #fff;
}
.active {
  background: #858585;
}
.serif-t {
  font: 33px "Liberation Serif", serif;
  fill: #ececff;
}
.ln {
  fill: none;
  stroke: #c0c0fa;
  stroke-width: 3;
}
.thick { stroke-width: 4; }
.sh {
  fill: url(#lav);
  stroke: #1c2742;
}
.grip {
  height: 41px;
  display: flex;
  gap: 6px;
  padding: 33px 0 0 111px;
  background: #2a2a2a;
}
.grip.low {
  height: 15px;
  padding-top: 7px;
}
.grip i, .gutter-dots i {
  width: 3px;
  height: 3px;
  background: #999;
}
.gutter-dots {
  position: absolute;
  right: 4px;
  top: 49%;
  display: flex;
  flex-direction: column;
  gap: 6px;
}
.list-wrap {
  position: relative;
  height: 431px;
  overflow: hidden;
}
.list {
  list-style: none;
  height: 447px;
  padding-top: 1px;
  display: grid;
  grid-template-rows: repeat(10, 1fr);
}
.list li {
  display: flex;
  align-items: center;
  gap: 5px;
  padding-left: 11px;
  color: #f0f0f0;
  white-space: nowrap;
}
.sub::after {
  content: "";
  margin-left: -5px;
  border: 6px solid transparent;
  border-left-color: #fff;
}
.thumb {
  position: absolute;
  top: 4px;
  right: 3px;
  width: 9px;
  height: 192px;
  border-radius: 5px;
  background: #999;
}
.sets {
  display: flex;
  padding-left: 2px;
  background: #303030;
}
.sets button {
  width: 55px;
  height: 45px;
  border: 1px solid #0c0c0c;
}

/* attributes */
.attributes {
  background: #2d2d2c;
  font-size: 20px;
}
.attributes .head {
  margin-bottom: 10px;
}
.attributes > :not(.head) {
  margin-left: 7px;
  margin-right: 7px;
}
.attributes h3 {
  height: 36px;
  margin-bottom: 8px;
  display: flex;
  align-items: center;
  gap: 3px;
  font-size: 20px;
  font-weight: 500;
}
.attributes h3::after {
  content: "";
  flex: 1;
  height: 1px;
  background: #4a4a4a;
}
.field {
  height: 39px;
  margin-bottom: 8px;
  display: flex;
  align-items: center;
  border: 1px solid #808080;
  border-radius: 4px;
  background: linear-gradient(90deg, #616161 213px, #484848 213px);
  position: relative;
}
.field select {
  width: 100%;
  height: 37px;
  border: none;
  appearance: none;
  padding: 0 22px 0 54px;
  text-align-last: center;
  color: #f4f4f4;
  background: url("data:image/svg+xml,%3Csvg xmlns='http://www.w3.org/2000/svg' width='14' height='14'%3E%3Cpath d='M2 4l5 5 5-5' fill='none' stroke='white' stroke-width='2'/%3E%3C/svg%3E") no-repeat right 3px center;
}
.field .weight {
  padding: 0 30px 0 54px;
  text-align-last: right;
}
.swatch {
  position: absolute;
  left: 7px;
  width: 25px;
  height: 25px;
  border: 2px solid #111;
  background: #2c2c2c;
  box-shadow: inset 0 0 0 1px #444;
}
.color {
  display: block;
  width: 234px;
  height: 39px;
  margin-bottom: 8px;
  border-radius: 4px;
}
.white { background: #fff; }
.black {
  background: #000;
  border: 2px solid #333;
}
.field.opacity {
  justify-content: flex-end;
  background: linear-gradient(90deg, #eee, #7c7c7c 16px, #7c7c7c 213px, #484848 213px);
}
.opacity output {
  margin-right: 8px;
  font-size: 21px;
  text-shadow: 0 1px 4px #000;
  color: #fff;
}
.dots {
  width: 21px;
  height: 37px;
  font: 700 24px "DejaVu Sans", sans-serif;
}
.rule {
  position: absolute;
  left: 8px;
  width: 147px;
  height: 1px;
  background: #fff;
}
.rule.full {
  left: 4px;
  width: 70px;
  height: 2px;
}
.ends {
  display: flex;
  justify-content: space-between;
}
.ends svg {
  margin-top: 4px;
}
.ends .field {
  width: 101px;
  background: linear-gradient(90deg, #616161 80px, #484848 80px);
}
.shadow-row {
  display: flex;
  align-items: center;
}
.shadow-row input {
  appearance: none;
  width: 25px;
  height: 25px;
  margin: 0 11px 0 7px;
  border-radius: 5px;
  background: #555;
}
.chip {
  width: 38px;
  height: 38px;
  margin-left: auto;
  background: #000;
  border: 1px solid #3a3a3a;
}
.boxed {
  width: 23px;
  height: 39px;
  margin-left: 5px;
  border: 1px solid #777;
  border-radius: 4px;
  background: #484848;
}

/* document */
.doc {
  flex: 1;
  min-width: 0;
  display: flex;
  flex-direction: column;
}
.tabs {
  height: 48px;
  flex: none;
  padding: 6px 7px 0;
  background: #171717;
}
.tab {
  width: 414px;
  height: 42px;
  justify-content: flex-start;
  padding-left: 22px;
  border-radius: 8px 8px 0 0;
  background: #303030;
  font-size: 24px;
  color: #ccc;
}
.tab .x {
  width: 18px;
  height: 18px;
  margin-right: 8px;
}
.viewbar {
  height: 47px;
  flex: none;
  display: flex;
  align-items: center;
  border-bottom: 1px solid #161616;
  font-size: 17px;
}
.group {
  height: 31px;
  padding: 0 9px 0 8px;
  display: flex;
  align-items: center;
  justify-content: space-between;
  border-right: 1px solid #454545;
}
.nav { width: 82px; }
.wide {
  padding: 0 16px 0 11px;
  width: 319px;
}
.wide:has(.icons) {
  width: 353px;
}
.icons {
  display: flex;
  gap: 4px;
  padding-left: 4px;
}
.plane { width: 100px; padding: 0 4px; }
.plane .active { width: 48px; height: 38px; }
.scale { width: 171px; padding: 0 7px 0 12px; }
.fit { width: 97px; padding: 0 12px 0 14px; }
.zoom { width: 161px; padding: 0 9px 0 14px; }
.persp { width: 97px; padding: 0 3px 0 9px; }
.persp .active { width: 45px; height: 38px; }
.render { width: 298px; padding: 0 9px 0 12px; }
.last { gap: 9px; border: none; }
.viewbar select, .texture select {
  height: 24px;
  padding: 0 24px 0 9px;
  border: 1px solid #4a4a4a;
  border-radius: 5px;
  appearance: none;
  color: #e6e6e6;
  background: url("data:image/svg+xml,%3Csvg xmlns='http://www.w3.org/2000/svg' width='17' height='18'%3E%3Crect width='17' height='18' rx='4' fill='%23c9508a'/%3E%3Cpath d='M5 7l3.500 4 3.500-4' fill='none' stroke='white' stroke-width='2'/%3E%3C/svg%3E") no-repeat right 2px center, linear-gradient(#565656, #686868);
}
.w236 { width: 236px; }
.viewbar .w100 {
  width: 100px;
  padding-left: 12px;
  background-color: #2f2f2f;
  background-image: url("data:image/svg+xml,%3Csvg xmlns='http://www.w3.org/2000/svg' width='17' height='18'%3E%3Crect width='17' height='18' rx='4' fill='%23c9508a'/%3E%3Cpath d='M5 7l3.500 4 3.500-4' fill='none' stroke='white' stroke-width='2'/%3E%3C/svg%3E");
}
.pick {
  position: relative;
}
.pick select {
  width: 71px;
}
.pick svg {
  position: absolute;
  left: 8px;
  top: -1px;
}
.scale input {
  width: 113px;
  height: 24px;
  padding: 0 6px;
  border: 1px solid #3a3a3a;
  border-bottom: 2px solid #555;
  background: #303030;
}
.modebar {
  height: 65px;
  flex: none;
  display: flex;
  align-items: center;
  font-size: 17px;
}
.modes {
  display: flex;
  align-items: center;
  gap: 10px;
  padding: 4px 14px 0;
}
.modes .active {
  width: 54px;
  height: 43px;
  margin-left: -9px;
}
.texture {
  height: 36px;
  display: flex;
  align-items: center;
  gap: 13px;
  padding: 0 14px;
  border: solid #454545;
  border-width: 0 1px;
}
.texture .both {
  width: 298px;
  background-image: url("data:image/svg+xml,%3Csvg xmlns='http://www.w3.org/2000/svg' width='17' height='18'%3E%3Crect width='17' height='18' rx='4' fill='%23c9508a'/%3E%3Cpath d='M5 7l3.500-4 3.500 4M5 11l3.500 4 3.500-4' fill='none' stroke='white' stroke-width='2'/%3E%3C/svg%3E"), linear-gradient(#565656, #686868);
}
.hint {
  padding-left: 11px;
}
.opts {
  margin-left: auto;
  display: flex;
  align-items: center;
  gap: 23px;
  padding: 8px 13px 0 0;
}
.opts button {
  gap: 9px;
}
.etc {
  margin: 0 -14px 8px -18px;
}

/* drawing area */
.sheet {
  flex: 1;
  min-height: 0;
  display: grid;
  grid-template: 27px 1fr / 27px 1fr;
  background: #fff;
}
.corner {
  border-right: 1px solid #888;
}
.ruler-h {
  width: 100%;
  height: 27px;
  border-bottom: 2px solid #888;
}
.ruler-v {
  width: 27px;
  height: 100%;
  border-right: 1px solid #444;
}
.ruler-h text, .ruler-v text {
  font: 16px "Liberation Sans", sans-serif;
  fill: #000;
}
.tick { stroke: #333; }
.mark { fill: #f4ee7e; }
.canvas {
  position: relative;
  overflow: hidden;
  background: #fafaf5;
}
.drawing {
  width: 100%;
  height: 100%;
}
#grid path {
  stroke: #c6deeb;
}
.obj {
  fill: #fff;
  stroke: #111;
}
.logo-face {
  font: 700 36px Inter, sans-serif;
  fill: #fff;
}
.logo-word {
  font: 700 124px "DejaVu Sans", sans-serif;
  text-anchor: middle;
  fill: #b6b7b6;
}
.logo-word .tint { fill: #b3b3ee; }
.logo-site {
  font: 500 60px Inter, sans-serif;
  fill: #fff;
}
.resource {
  position: absolute;
  left: 395px;
  top: 20px;
  width: 1830px;
  height: 29px;
  display: flex;
  align-items: center;
  padding: 0 13px 0 9px;
  background: #191919;
  box-shadow: 0 12px 36px rgba(0, 0, 0, 0.35);
  font-size: 19px;
  font-weight: 500;
  color: #d4d4d4;
}
.resource .x { margin-right: 9px; }
.min {
  width: 13px;
  height: 3px;
  margin-right: 12px;
  background: #aaa;
}
.resource .help { margin-left: auto; }

/* object info */
.info {
  width: 341px;
  flex: none;
  padding-left: 11px;
  position: relative;
  background: #2a2a2a;
}
.info .gutter-dots {
  left: 4px;
  right: auto;
}
.info-body {
  height: 100%;
  display: flex;
  flex-direction: column;
  background: #2d2d2c;
}
.info-tabs {
  height: 46px;
  flex: none;
  display: flex;
  align-items: flex-end;
  padding-left: 7px;
  background: #0d0d0d;
  font-size: 20px;
}
.info-tabs button {
  width: 94px;
  height: 39px;
  color: #8e8e8e;
}
.info-tabs .on {
  border-radius: 8px 8px 0 0;
  background: #303030;
  color: #e0e0e0;
}
.info-tabs button:not(.on) {
  background: linear-gradient(#555, #555) no-repeat right center / 2px 25px;
}
.selection {
  height: 40px;
  flex: none;
  padding: 9px 4px;
  background: #303030;
  font-weight: 700;
}
.name-row {
  display: flex;
  align-items: center;
  gap: 7px;
  margin-top: auto;
  padding: 6px 5px 5px 4px;
  border-top: 1px solid #383838;
  font-size: 17px;
  color: #5c5c5c;
}
.name-row input {
  flex: 1;
  min-width: 0;
  height: 25px;
  border: 1px solid #363636;
  background: #303030;
}

/* status bar */
.statusbar {
  height: 43px;
  flex: none;
  display: flex;
  align-items: center;
  padding: 0 25px 0 11px;
  border-top: 1px solid #454545;
  font-size: 20px;
}
.alert {
  width: 600px;
  height: 36px;
  margin: 0 4px 0 auto;
  display: flex;
  align-items: center;
  justify-content: center;
  border-radius: 10px;
  background: #e93425;
  color: #fff;
  font-size: 20px;
  font-weight: 700;
}
.snaps {
  display: flex;
  gap: 3px;
}
.snaps button {
  width: 40px;
  height: 39px;
  border: 1px solid #5c5c5c;
  background: #454545;
}
.snaps svg {
  width: 34px;
  height: 34px;
}
.snaps .on { background: #848484; }
.snaps .dim { background: #393939; }
.w {
  fill: none;
  stroke: #fff;
  stroke-width: 2;
}
```
